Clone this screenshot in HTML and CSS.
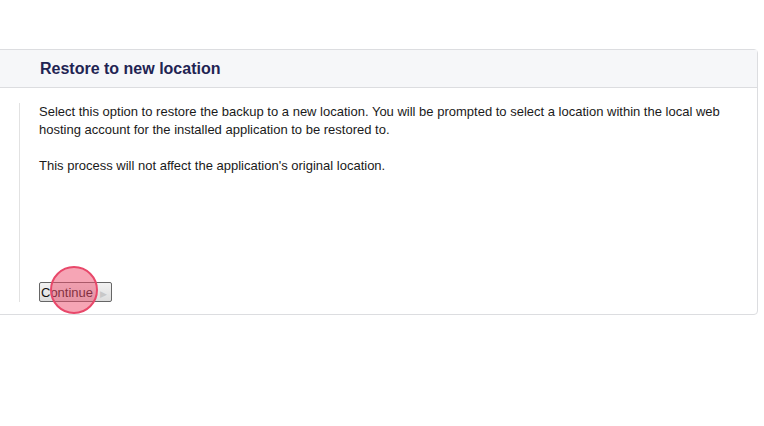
FILE: index.html
```
<!DOCTYPE html>
<html lang="en">
<head>
    <meta charset="UTF-8">
    <title>Restore to new location</title>
    <link rel="stylesheet" href="styles.css">
</head>
<body>
    <div class="panel">
        <div class="panel-head">
            <h2>Restore to new location</h2>
        </div>
        <div class="panel-body">
            <div class="content">
                <p>Select this option to restore the backup to a new location. You will be prompted to select a location within the local web hosting account for the installed application to be restored to.</p>
                <p>This process will not affect the application's original location.</p>
                <div class="actions">
                    <button class="btn">Continue<span class="arrow">&#9654;</span></button>
                    <span class="click-dot"></span>
                </div>
            </div>
        </div>
    </div>
</body>
</html>
```

FILE: styles.css
```
body {
    margin: 0;
    font-family: "Liberation Sans", Arial, sans-serif;
    background: #fff;
    color: #1a1a1a;
}
.panel {
    margin: 49px 6px 0 -10px;
    border: 1px solid #dcdde0;
    border-radius: 4px;
    height: 264px;
    display: flex;
    flex-direction: column;
}
.panel-head {
    background: #f6f7f9;
    border-bottom: 1px solid #dcdde0;
    height: 37px;
    display: flex;
    align-items: center;
    padding-left: 49px;
}
.panel-head h2 {
    margin: 0;
    font-size: 16px;
    font-weight: bold;
    color: #1f2453;
}
.panel-body {
    flex: 1;
    padding: 15px 0 12px 28px;
    display: flex;
}
.content {
    flex: 1;
    border-left: 1px solid #e2e2e2;
    padding: 0 30px 0 19px;
    display: flex;
    flex-direction: column;
}
.content p {
    margin: 0 0 18px;
    font-size: 13px;
    line-height: 18px;
}
.actions {
    margin-top: auto;
    position: relative;
}
.btn {
    font-family: "Liberation Sans", Arial, sans-serif;
    font-size: 13px;
    color: #111;
    background: linear-gradient(#f2f2f2, #dddddd);
    border: 1px solid #666;
    border-radius: 2px;
    height: 20px;
    width: 73px;
    padding: 0 0 0 1px;
    text-align: left;
    margin-bottom: 0;
}
.arrow {
    color: #c8c8c8;
    font-size: 9px;
    margin-left: 7px;
}
.click-dot {
    position: absolute;
    left: 11px;
    top: -16px;
    width: 44px;
    height: 44px;
    border-radius: 50%;
    background: rgba(238, 76, 108, 0.5);
    border: 2px solid #e8486a;
}
```
